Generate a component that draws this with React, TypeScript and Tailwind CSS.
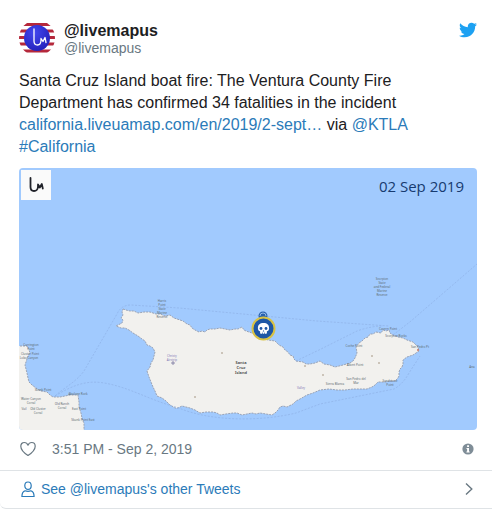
import React from 'react'
import { FaTwitter } from 'react-icons/fa'

const ISLAND =
    'M104 141L107 142L111 143L115 143L119 145L125 144L131 144L137 146L141 146L146 148L151 147L155 150L158 151L164 153L168 156L171 157L173 160L176 162L180 164L183 163L186 164L188 162L191 161L196 161L201 160L206 161L211 162L216 161L219 161L223 159L225 162L227 163L233 165L241 169L249 172L256 173L260 177L264 179L266 182L269 184L271 187L274 188L275 191L277 193L284 194L287 196L291 196L296 195L301 193L305 196L311 197L316 199L320 198L324 197L331 195L334 193L336 190L338 185L337 179L340 175L343 173L346 170L349 169L351 166L354 166L357 164L362 165L364 162L367 163L370 162L371 165L374 167L379 169L384 170L388 172L394 174L397 177L399 179L400 183L397 185L394 187L388 189L384 192L384 196L383 199L381 201L380 204L380 208L379 210L376 213L371 213L366 214L359 214L356 217L353 219L348 221L341 221L334 221L326 222L318 222L310 221L301 222L294 225L288 227L281 231L277 233L274 236L268 239L264 238L261 239L259 242L256 245L253 247L247 246L241 245L237 246L233 245L228 246L223 247L218 245L214 245L207 246L201 247L198 245L194 244L187 244L181 245L176 242L171 240L167 239L163 238L159 240L156 240L151 237L147 233L143 230L138 228L136 223L134 219L132 214L130 209L128 203L131 199L132 195L134 192L135 188L136 184L134 180L131 178L128 177L126 173L123 171L119 168L114 165L110 162L106 160L102 160L97 158L103 155L104 152L102 150L104 147L103 144Z'

const MAINLAND =
    'M-2 178L8 178L9 180L10 182L11 185L9 188L8 191L7 194L6 197L7 201L8 205L9 210L10 214L13 217L17 220L22 223L28 224L31 227L34 229L41 229L46 228L51 227L59 227L60 234L60 239L62 245L63 250L64 253L65 255L65 264L-2 264Z'

type Label = { x: number; y: number; lines: string[]; color?: string }

const labels: Label[] = [
    { x: 143, y: 134, lines: ['Harris', 'Point', 'State', 'Marine', 'Reserve'] },
    { x: 363, y: 112, lines: ['Scorpion', 'State', 'and Federal', 'Marine', 'Reserve'] },
    { x: 12, y: 178, lines: ['Carrington', 'Point'] },
    { x: 11, y: 187, lines: ['Cluster Point'] },
    { x: 10, y: 191, lines: ['Lobo Canyon'] },
    { x: 24, y: 223, lines: ['Skunk Point'] },
    { x: 59, y: 227, lines: ['Abalone Rock'] },
    { x: 12, y: 232, lines: ['Water Canyon', 'Corral'] },
    { x: 43, y: 237, lines: ['Old Ranch', 'Corral'] },
    { x: 19, y: 242, lines: ['Old Cluster', 'Corral'] },
    { x: 5, y: 242, lines: ['Vail'] },
    { x: 60, y: 242, lines: ['East Point'] },
    { x: 64, y: 253, lines: ['Skunk Point East'] },
    { x: 153, y: 189, lines: ['Christy', 'Airstrip'], color: '#7f78b5' },
    { x: 369, y: 162, lines: ['Cavern Point'] },
    { x: 377, y: 169, lines: ['Scorpion Rocks'] },
    { x: 335, y: 179, lines: ['Coche Point'] },
    { x: 401, y: 180, lines: ['San Pedro Pt'] },
    { x: 336, y: 198, lines: ['Albert Point'] },
    { x: 316, y: 217, lines: ['Sierra Blanca'] },
    { x: 337, y: 212, lines: ['San Pedro del', 'Mar'] },
    { x: 371, y: 214, lines: ['Sandstone', 'Point'] },
    { x: 282, y: 221, lines: ['Valley'], color: '#7f78b5' },
    { x: 453, y: 200, lines: ['Ana'] },
]

const dots = [[203, 185], [176, 229], [286, 198], [353, 188], [360, 195], [304, 207]]

function IslandMap() {
    return (
        <svg viewBox="0 0 458 262" className="block h-auto w-full" role="img" aria-label="Map of Santa Cruz Island">
            <rect width="458" height="262" fill="#a1cafe" />
            <g fill="#f2f1ee" stroke="#9aa3b5" strokeWidth="1" strokeDasharray="2 1" strokeLinejoin="round">
                <path d={ISLAND} />
                <path d={MAINLAND} />
            </g>
            <g fill="none" stroke="#8fb2e6" strokeWidth="0.7" strokeDasharray="2 1.5">
                <path d="M36 228C46 219 57 214 65 203L98 146Q102 137 112 137L160 140L298 153L370 158" />
                <path d="M36 228C54 217 68 212 85 215C110 219 130 232 160 240C190 253 240 254 277 245L301 236L375 221Q384 216 390 205L401 188" />
                <path d="M277 193L300 182L338 163Q352 158 364 158" />
                <path d="M374 167L392 153L458 96" />
            </g>
            <g fontFamily="'Noto Sans', sans-serif" textAnchor="middle">
                {labels.map(({ x, y, lines, color }) => (
                    <text key={`${x}-${y}`} fontSize="3" fill={color || '#5d6a70'}>
                        {lines.map((line, i) => (
                            <tspan key={line} x={x} y={y + i * 4}>{line}</tspan>
                        ))}
                    </text>
                ))}
                <text fontSize="4" fontWeight="600" fill="#444">
                    <tspan x="222" y="196">Santa</tspan>
                    <tspan x="222" y="201">Cruz</tspan>
                    <tspan x="222" y="206">Island</tspan>
                </text>
            </g>
            {dots.map(([cx, cy]) => (
                <circle key={cx} cx={cx} cy={cy} r="0.8" fill="#9b8c76" />
            ))}
            <path d="M152 195h4M154 193v4" stroke="#77739c" strokeWidth="0.8" />
            <circle cx="399" cy="182" r="0.9" fill="#c46a5a" />

            <circle cx="244" cy="148" r="4.5" fill="#2a62ae" />
            <path d="M241 148a3 3 0 0 1 6 0" fill="none" stroke="#9ec2ee" strokeWidth="0.9" />
            <circle cx="244.5" cy="160.500" r="11" fill="#1e57a5" stroke="#d8c244" strokeWidth="2" />
            <path
                d="M244.500 155c-3.800 0-5.600 2.100-5.600 4.900 0 1.700.7 2.900 2.200 3.400v1.600q0 .8.8.8h5.200q.8 0 .8-.8v-1.600c1.500-.5 2.200-1.700 2.200-3.400 0-2.800-1.800-4.900-5.600-4.900z"
                fill="#fff"
            />
            <g fill="#1e57a5">
                <circle cx="242" cy="160.500" r="1.4" />
                <circle cx="247" cy="160.500" r="1.4" />
                <path d="M244.500 162l.8 1.500h-1.600zM243.200 164.500h.6v1.500h-.6zM245.200 164.500h.6v1.500h-.6z" />
            </g>
        </svg>
    )
}

function Avatar() {
    return (
        <svg viewBox="0 0 36 36" className="size-9 shrink-0" aria-hidden="true">
            <defs>
                <clipPath id="avatar-clip">
                    <circle cx="18" cy="18" r="18" />
                </clipPath>
                <radialGradient id="avatar-blue" cx="0.4" cy="0.3" r="0.7">
                    <stop offset="0" stopColor="#4247ee" />
                    <stop offset="1" stopColor="#2523bd" />
                </radialGradient>
            </defs>
            <g clipPath="url(#avatar-clip)">
                <rect width="36" height="36" fill="#fff" />
                <path d="M0 4.500h36M0 11h36M0 17.500h36M0 24h36M0 31h36" stroke="#b5283b" strokeWidth="3.200" />
                <circle cx="18" cy="18" r="13" fill="url(#avatar-blue)" />
            </g>
            <path d="M15 9v12q0 4 3.500 4t3.500-5v-1.500l2 3 2-4 1 5" fill="none" stroke="#fff" strokeWidth="1.300" strokeLinecap="round" strokeLinejoin="round" />
        </svg>
    )
}

export default function App() {
    return (
        <article className="rounded-bl-md border-b border-[#dfe3e6] bg-white font-['Liberation_Sans',Arial,sans-serif] text-base text-[#1c2022]">
            <div className="pt-5 pr-[15px] pl-[19px]">
                <header className="flex items-start">
                    <a href="#profile" className="flex items-center gap-[9px]">
                        <Avatar />
                        <span className="pt-0.5">
                            <span className="block leading-[18px] font-bold">@livemapus</span>
                            <span className="block text-sm leading-4 text-[#697882]">@livemapus</span>
                        </span>
                    </a>
                    <a href="#tweet" aria-label="View on Twitter" className="mt-px ml-auto text-[#1da1f2]">
                        <FaTwitter size={18} />
                    </a>
                </header>

                <p className="mt-3.5 leading-[22px]">
                    Santa Cruz Island boat fire: The Ventura County Fire Department has confirmed 34 fatalities in the incident{' '}
                    <a href="#link" className="text-[#2b7bb9]">california.liveuamap.com/en/2019/2-sept…</a> via{' '}
                    <a href="#ktla" className="text-[#2b7bb9]">@KTLA</a>{' '}
                    <a href="#california" className="text-[#2b7bb9]">#California</a>
                </p>

                <div className="relative mt-2.5 overflow-hidden rounded">
                    <IslandMap />
                    <svg viewBox="0 0 30 30" className="absolute top-0.5 left-0.5 size-[30px] bg-[#fafafa]" aria-hidden="true">
                        <path d="M9.500 8v9q0 4 3.500 4t4-4v-2.500l1.800 3 2-3.500 1 4.500" fill="none" stroke="#20222a" strokeWidth="1.800" strokeLinecap="round" strokeLinejoin="round" />
                    </svg>
                    <time className="absolute top-1.5 right-[13px] font-['Open_Sans',sans-serif] text-[15px] leading-6 text-[#173b70]">02 Sep 2019</time>
                </div>

                <div className="flex h-10 items-center pb-0.5 text-sm text-[#697882]">
                    <button aria-label="Like">
                        <svg viewBox="0 0 18 18" className="size-[18px]" fill="none" stroke="currentColor" strokeWidth="1.200" strokeLinejoin="round">
                            <path d="M9 15.500C6 13.500 1.800 9.800 1.800 6.200 1.800 3.900 3.400 2.500 5.300 2.500 7 2.500 8.300 3.500 9 5.200 9.700 3.500 11 2.500 12.700 2.500 14.600 2.500 16.200 3.900 16.200 6.200 16.200 9.800 12 13.500 9 15.500Z" />
                        </svg>
                    </button>
                    <a href="#tweet" className="ml-[15px]">3:51 PM - Sep 2, 2019</a>
                    <button aria-label="Twitter Ads info and privacy" className="mr-[3px] ml-auto">
                        <svg viewBox="0 0 12 12" className="size-3">
                            <circle cx="6" cy="6" r="5.600" fill="#7f8d97" />
                            <path d="M5.100 2.200h1.900v1.700h-1.900zM4.500 4.900h2.500v3.500h.700v1.200h-3.300v-1.200h.700v-2.300h-.600z" fill="#fff" />
                        </svg>
                    </button>
                </div>
            </div>

            <a href="#more" className="flex h-[38px] items-center border-t border-[#dfe3e6] pr-[15px] pb-0.5 pl-[19px] text-sm text-[#2b7bb9]">
                <svg viewBox="0 0 18 18" className="size-[18px]" fill="none" stroke="currentColor" strokeWidth="1.200" strokeLinejoin="round">
                    <ellipse cx="9" cy="5.700" rx="3.200" ry="3.700" />
                    <path d="M6 10.800C4 11.300 3 12.800 2.900 16.500H15.100C15 12.800 14 11.300 12 10.800Q9 11.800 6 10.800Z" />
                </svg>
                <span className="ml-1">See @livemapus's other Tweets</span>
                <svg viewBox="0 0 8 14" className="mr-1 ml-auto h-3.5 w-2" fill="none" stroke="#697882" strokeWidth="1.400">
                    <path d="M1 1.500L6.800 7L1 12.500" />
                </svg>
            </a>
        </article>
    )
}
